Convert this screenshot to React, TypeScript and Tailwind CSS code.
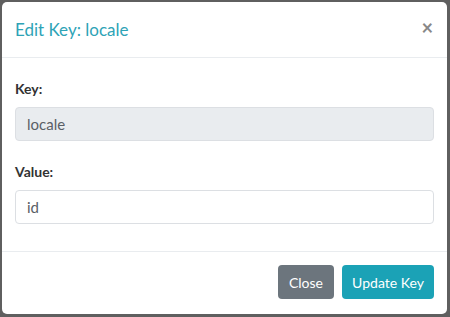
import React from "react";

export default function App() {
  const font = { fontFamily: "Lato, 'Source Sans Pro', 'Noto Sans', sans-serif" };
  return (
    <div className="w-[450px] h-[317px] bg-[#5f5f5f] pt-[2px] pl-[2px] pr-[3px] pb-[3px]" style={font}>
      <div className="w-full h-full bg-white rounded-[5px] flex flex-col overflow-hidden">
        <div className="h-[56px] border-b border-[#e9ecef] flex items-center justify-between pl-[13px] pr-[14px] shrink-0">
          <h5 className="text-[17px] leading-[26px] text-[#2ea3b6] font-normal">Edit Key: locale</h5>
          <span className="text-[20px] leading-none font-bold text-[#888] mt-[-6px]">×</span>
        </div>
        <div className="flex-1 px-[13px] pt-[21px]">
          <div className="text-[14px] leading-[20px] font-bold text-[#333]">Key:</div>
          <div className="mt-[8px] h-[34px] rounded-[4px] border border-[#dcdfe3] bg-[#e9ecef] flex items-center px-[11px] text-[15px] text-[#5a5f66]">
            locale
          </div>
          <div className="mt-[21px] text-[14px] leading-[20px] font-bold text-[#333]">Value:</div>
          <div className="mt-[8px] h-[34px] rounded-[4px] border border-[#dcdfe3] bg-white flex items-center px-[11px] text-[15px] text-[#5a5f66]">
            id
          </div>
        </div>
        <div className="h-[63px] border-t border-[#e9ecef] flex items-center justify-end gap-[8px] pr-[13px] pb-[2px] shrink-0">
          <button className="h-[34px] w-[56px] rounded-[4px] bg-[#6c757d] text-white text-[14px]">Close</button>
          <button className="h-[34px] w-[92px] rounded-[4px] bg-[#1ba2b6] text-white text-[14px]">Update Key</button>
        </div>
      </div>
    </div>
  );
}
